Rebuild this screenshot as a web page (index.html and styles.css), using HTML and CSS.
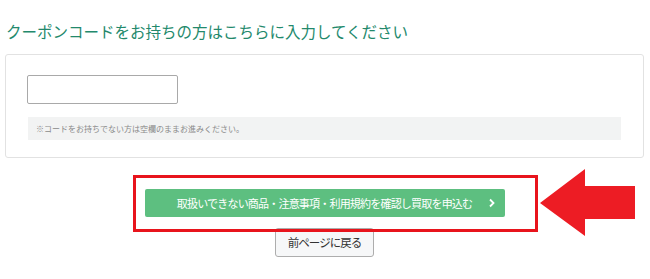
FILE: index.html
```html
<!DOCTYPE html>
<html lang="ja">
<head>
<meta charset="utf-8">
<link rel="stylesheet" href="styles.css">
</head>
<body>
<div class="page">
  <h2 class="title">クーポンコードをお持ちの方はこちらに入力してください</h2>
  <div class="card">
    <input class="code-input" type="text">
    <div class="notice">※コードをお持ちでない方は空欄のままお進みください。</div>
  </div>
  <div class="actions">
    <button class="submit" type="button">取扱いできない商品・注意事項・利用規約を確認し買取を申込む
      <svg class="chev" width="8" height="10" viewBox="0 0 8 10"><path d="M2 1.5 L5.5 5 L2 8.5" fill="none" stroke="#fff" stroke-width="1.8"/></svg>
    </button>
    <button class="back" type="button">前ページに戻る</button>
    <div class="highlight"></div>
    <svg class="arrow" width="96" height="68" viewBox="0 0 96 68"><polygon points="0,34 45,0 45,17 95,17 95,50 45,50 45,67" fill="#ed1c24"/></svg>
  </div>
</div>
</body>
</html>
```
FILE: styles.css
```css
body {
  margin: 0;
  background: #fff;
  font-family: "Noto Sans CJK JP", "Noto Sans", sans-serif;
}
.page {
  width: 639px;
  margin-left: 5px;
}
.title {
  margin: 21px 0 13px 1px;
  font-size: 15.5px;
  line-height: 20px;
  font-weight: normal;
  color: #23896c;
  letter-spacing: 0;
  white-space: nowrap;
}
.card {
  box-sizing: border-box;
  height: 104px;
  border: 1px solid #e2e2e2;
  border-radius: 3px;
  padding: 20px 21px 17px 21px;
  display: flex;
  flex-direction: column;
  align-items: flex-start;
}
.code-input {
  box-sizing: border-box;
  width: 151px;
  height: 29px;
  margin: 0;
  border: 1px solid #a9a9a9;
  border-radius: 2px;
  background: #fff;
  padding: 0 6px;
}
.notice {
  box-sizing: border-box;
  margin-top: 13px;
  margin-left: 1px;
  width: 593px;
  height: 23px;
  background: #f2f3f3;
  color: #8a8a8a;
  font-size: 8px;
  line-height: 23px;
  padding-left: 8px;
  white-space: nowrap;
}
.actions {
  position: relative;
  margin-top: 31px;
  display: flex;
  flex-direction: column;
  align-items: center;
}
.submit {
  position: relative;
  box-sizing: border-box;
  width: 360px;
  height: 28px;
  border: none;
  border-radius: 2px;
  background: #5dbf80;
  color: #fff;
  font-family: inherit;
  font-size: 11px;
  letter-spacing: -0.8px;
  padding: 0 0 1px 0;
  text-align: center;
  white-space: nowrap;
}
.chev {
  position: absolute;
  right: 9px;
  top: 9px;
}
.back {
  box-sizing: border-box;
  margin-top: 11px;
  width: 99px;
  height: 29px;
  border: 1px solid #adadad;
  border-radius: 3px;
  background: #f6f7f8;
  color: #333;
  font-family: inherit;
  font-size: 11.5px;
  letter-spacing: -1px;
  padding: 0 0 2px 0;
  white-space: nowrap;
}
.highlight {
  position: absolute;
  left: 128px;
  top: -14px;
  width: 405px;
  height: 57px;
  box-sizing: border-box;
  border: 3px solid #e8141c;
}
.arrow {
  position: absolute;
  left: 535px;
  top: -20px;
}
```
